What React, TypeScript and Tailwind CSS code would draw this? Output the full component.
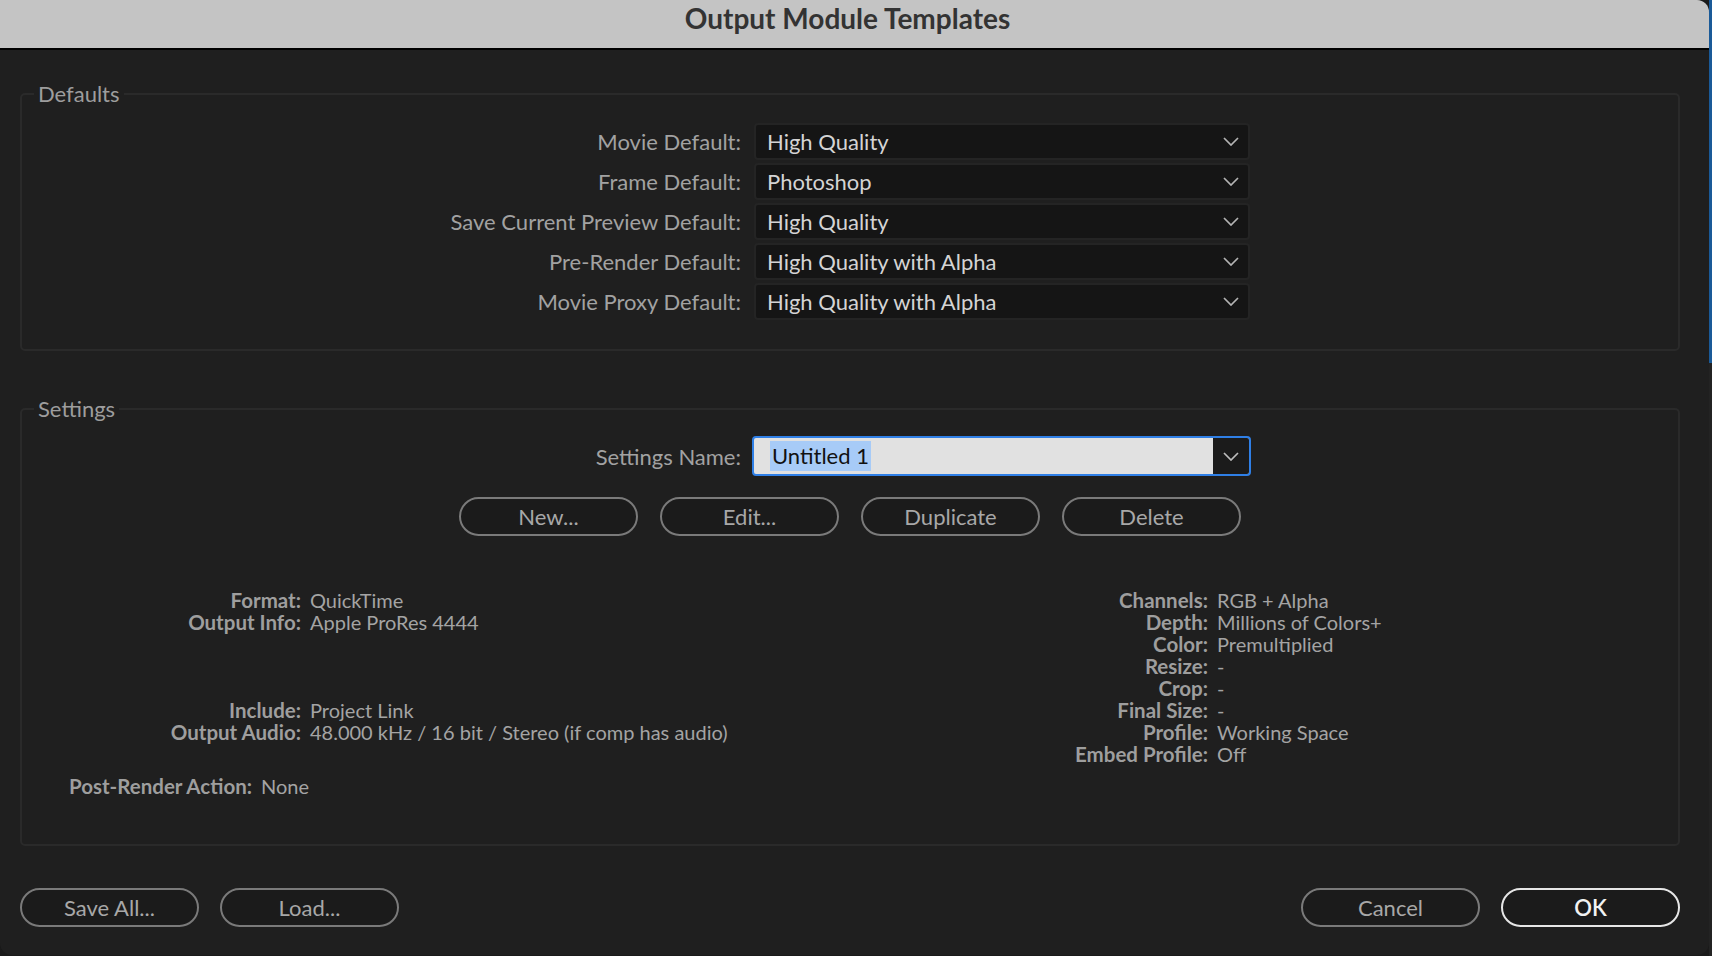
import React from 'react';

const Chevron: React.FC<{ color?: string }> = ({ color = '#b4b4b4' }) => (
  <svg width="16" height="9" viewBox="0 0 16 9" className="shrink-0">
    <path d="M1 1l7 7 7-7" fill="none" stroke={color} strokeWidth="1.7" />
  </svg>
);

const defaults = [
  { label: 'Movie Default:', value: 'High Quality' },
  { label: 'Frame Default:', value: 'Photoshop' },
  { label: 'Save Current Preview Default:', value: 'High Quality' },
  { label: 'Pre-Render Default:', value: 'High Quality with Alpha' },
  { label: 'Movie Proxy Default:', value: 'High Quality with Alpha' },
];

const leftInfo: [string, string][] = [
  ['Format:', 'QuickTime'],
  ['Output Info:', 'Apple ProRes 4444'],
  ['', ''],
  ['', ''],
  ['', ''],
  ['Include:', 'Project Link'],
  ['Output Audio:', '48.000 kHz / 16 bit / Stereo (if comp has audio)'],
  ['', ''],
];

const rightInfo: [string, string][] = [
  ['Channels:', 'RGB + Alpha'],
  ['Depth:', 'Millions of Colors+'],
  ['Color:', 'Premultiplied'],
  ['Resize:', '-'],
  ['Crop:', '-'],
  ['Final Size:', '-'],
  ['Profile:', 'Working Space'],
  ['Embed Profile:', 'Off'],
];

const PillButton: React.FC<{ children: React.ReactNode; primary?: boolean }> = ({ children, primary }) => (
  <button
    className={
      primary
        ? 'h-[39px] w-[179px] rounded-full border-2 border-[#e6e6e6] bg-[#1b1b1b] text-[22px] leading-none font-semibold text-[#f2f2f2]'
        : 'h-[39px] w-[179px] rounded-full border-2 border-[#7a7a7a] bg-[#1b1b1b] text-[22px] leading-none text-[#a8a8a8]'
    }
  >
    {children}
  </button>
);

const InfoGrid: React.FC<{ rows: [string, string][]; labelWidth: string }> = ({ rows, labelWidth }) => (
  <div className={`grid ${labelWidth} gap-x-[9px] text-[20px] leading-[22px] text-[#a4a4a4]`}>
    {rows.map(([k, v], i) => (
      <React.Fragment key={i}>
        <span className="text-right text-[20.5px] font-bold whitespace-nowrap text-[#9e9e9e]">{k || '\u00a0'}</span>
        <span className="whitespace-nowrap">{v || '\u00a0'}</span>
      </React.Fragment>
    ))}
  </div>
);

export default function App() {
  return (
    <div className="flex h-[956px] w-[1712px] overflow-hidden bg-[#1a1a1a] font-['Lato','Noto_Sans',sans-serif]">
      <div className="flex h-[955px] w-[1709px] flex-col overflow-hidden rounded-tr-[12px] rounded-b-[12px] bg-[#1f1f1f]">
        {/* title bar */}
        <div className="flex h-[50px] shrink-0 justify-center border-b-2 border-black bg-[#c4c4c4] pt-[3px]">
          <span className="pr-[14px] text-[28px] leading-[30px] font-bold text-[#333333]">Output Module Templates</span>
        </div>

        <div className="flex flex-col pl-[20px] pr-[29px]">
          {/* Defaults */}
          <fieldset className="mt-[30px] rounded-[5px] border-2 border-[#2a2a2a] pt-[15px] pb-[29px]">
            <legend className="ml-[12px] px-[4px] text-[22px] leading-[28px] text-[#9d9d9d]">Defaults</legend>
            <div className="flex flex-col gap-[3px]">
              {defaults.map((d) => (
                <div key={d.label} className="grid grid-cols-[719px_496px] items-center gap-x-[13px]">
                  <span className="text-right text-[22px] text-[#a2a2a2]">{d.label}</span>
                  <div className="flex h-[37px] items-center justify-between rounded-[4px] border-2 border-[#242424] bg-[#151515] pl-[11px] pr-[9px] text-[22px] text-[#d4d4d4]">
                    <span>{d.value}</span>
                    <Chevron />
                  </div>
                </div>
              ))}
            </div>
          </fieldset>

          {/* Settings */}
          <fieldset className="mt-[44px] rounded-[5px] border-2 border-[#2a2a2a] pt-[13px] pb-[47px]">
            <legend className="ml-[12px] px-[4px] text-[22px] leading-[28px] text-[#9d9d9d]">Settings</legend>
            <div className="grid grid-cols-[719px_499px] items-center gap-x-[11px]">
              <span className="text-right text-[22px] text-[#a2a2a2]">Settings Name:</span>
              <div className="flex h-[40px] overflow-hidden rounded-[4px] border-2 border-[#2f7fe6] bg-[#e1e1e1]">
                <div className="flex flex-1 items-center pl-[16px]">
                  <span className="bg-[#a7cbf7] px-[2px] text-[22px] leading-[30px] text-[#111111]">Untitled 1</span>
                </div>
                <div className="flex w-[36px] items-center justify-center bg-[#1b1b1b]">
                  <Chevron color="#bdbdbd" />
                </div>
              </div>
            </div>

            <div className="mt-[21px] flex justify-center gap-[22px]">
              <PillButton>New...</PillButton>
              <PillButton>Edit...</PillButton>
              <PillButton>Duplicate</PillButton>
              <PillButton>Delete</PillButton>
            </div>

            <div className="mt-[53px] flex">
              <div className="w-[978px]">
                <InfoGrid rows={leftInfo} labelWidth="grid-cols-[279px_auto]" />
              </div>
              <InfoGrid rows={rightInfo} labelWidth="grid-cols-[208px_auto]" />
            </div>

            <div className="mt-[10px]">
              <InfoGrid rows={[['Post-Render Action:', 'None']]} labelWidth="grid-cols-[230px_auto]" />
            </div>
          </fieldset>

          {/* bottom buttons */}
          <div className="mt-[42px] flex items-center">
            <div className="flex gap-[21px]">
              <PillButton>Save All...</PillButton>
              <PillButton>Load...</PillButton>
            </div>
            <div className="ml-auto flex gap-[21px]">
              <PillButton>Cancel</PillButton>
              <PillButton primary>OK</PillButton>
            </div>
          </div>
        </div>
      </div>
      <div className="flex w-[3px] flex-col">
        <div className="h-[363px] bg-[#1a5a98]" />
        <div className="flex-1 bg-[#232323]" />
      </div>
    </div>
  );
}
